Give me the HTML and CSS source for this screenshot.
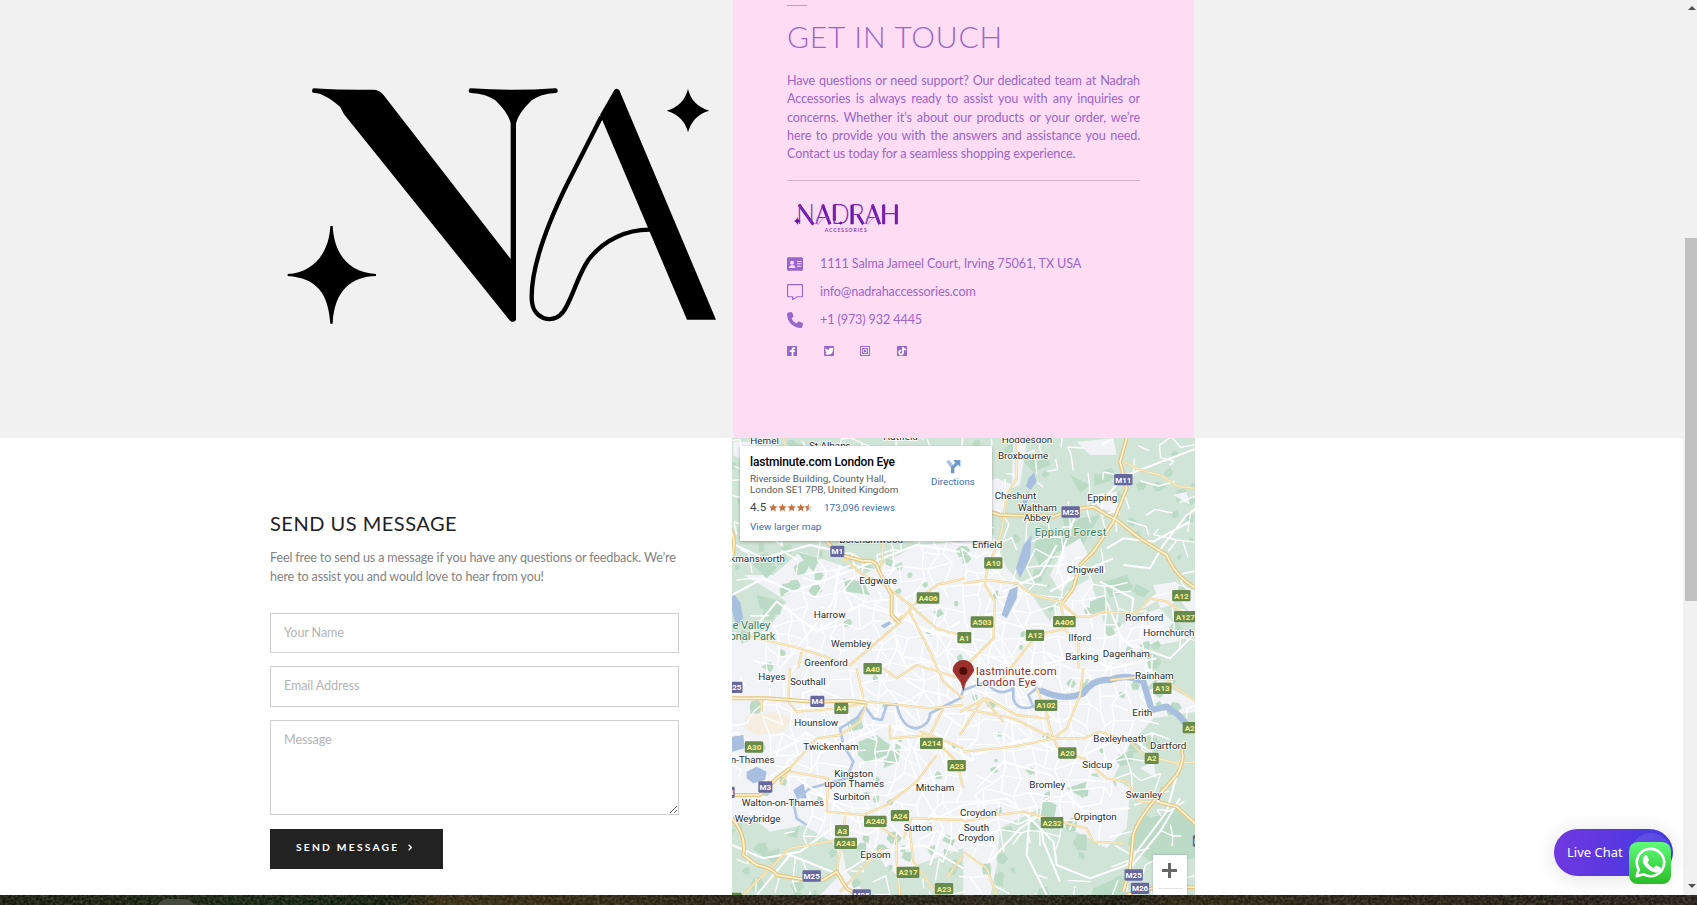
FILE: index.html
```html
<!DOCTYPE html>
<html lang="en">
<head>
<meta charset="utf-8">
<title>Nadrah Accessories – Contact</title>
<link rel="stylesheet" href="styles.css">
</head>
<body>
<main class="page">
  <section class="intro">
    <svg class="monogram" viewBox="0 0 1389 870" aria-label="NA">
      <path d="M133 85Q180 90 309 89Q327 89 340 104L722 597V190Q716 160 676 121Q650 102 603 99A7 7 0 0 1 603 85Q730 94 855 85A7 7 0 0 1 857 99Q810 102 785 121Q745 160 738 190V780Q730 790 720 782L222 163L210 140Q160 98 133 99A7 7 0 0 1 133 85Z"/>
      <path d="M1033 90Q1041 82 1048 91L1338 779H1251L998 183L990 165Z"/>
      <path d="M994 170L890 375Q785 590 785 710C785 750 800 765 820 774C850 784 875 770 890 738C915 690 925 645 955 600C1000 540 1070 508 1142 509" fill="none" stroke="#000" stroke-width="13"/>
      <path d="M181 498H188C192 575 230 637 318 642V648C245 650 193 690 188 791H181C175 700 140 654 53 648V642C130 638 177 580 181 498Z"/>
      <path d="M1254 87Q1266 137 1318 152Q1268 166 1254 217Q1242 168 1190 152Q1241 138 1254 87Z"/>
    </svg>
    <div class="touch">
      <span class="rule"></span>
      <h1>GET IN TOUCH</h1>
      <p class="lead">Have questions or need support? Our dedicated team at Nadrah Accessories is always ready to assist you with any inquiries or concerns. Whether it’s about our products or your order, we’re here to provide you with the answers and assistance you need. Contact us today for a seamless shopping experience.</p>
      <svg class="wordmark" viewBox="0 0 330 99">
        <path class="wm-heavy" d="M36 2L79 62M107 3L129 61M142 2V50M195 2V61M213 34L229 61M256 3L278 61M290 2V61M328 2V61"/>
        <text class="wm-name" x="28" y="61" textLength="309" lengthAdjust="spacingAndGlyphs">NADRAH</text>
        <path class="wm-hair" d="M99 28Q84 52 90 60Q96 64 101 50Q108 39 121 39M248 28Q233 52 239 60Q245 64 250 50Q257 39 270 39"/>
        <path fill="#6a0dad" d="M31 39Q33 49 42 51Q33 53 31 63Q29 53 20 51Q29 49 31 39ZM161 52l5 5-5 5-5-5Z"/>
        <text class="wm-sub" x="113" y="84" textLength="126">ACCESSORIES</text>
      </svg>
      <ul class="contacts">
        <li><svg viewBox="0 0 48 48"><path fill-rule="evenodd" d="M4 4H44Q48 4 48 8V40Q48 44 44 44H4Q0 44 0 40V8Q0 4 4 4ZM15 14A6 6 0 1 0 15 26A6 6 0 1 0 15 14ZM6 36H25Q25 28 19 28H12Q6 28 6 36ZM30 15V18H43V15ZM30 22V25H43V22ZM30 29V32H43V29Z"/></svg><span>1111 Salma Jameel Court, Irving 75061, TX USA</span></li>
        <li><svg viewBox="0 0 48 48"><path fill="none" stroke="#9966cc" stroke-width="3.4" d="M4 1.7H44Q46.3 1.7 46.3 4V36Q46.3 38.3 44 38.3H30L17 47V38.3H4Q1.7 38.3 1.7 36V4Q1.7 1.7 4 1.7Z"/></svg><span>info@nadrahaccessories.com</span></li>
        <li><svg viewBox="0 0 512 512"><path d="M164.900 24.600c-7.700-18.600-28-28.500-47.400-23.200l-88 24C12.100 30.200 0 46 0 64C0 311.400 200.600 512 448 512c18 0 33.800-12.100 38.600-29.500l24-88c5.300-19.400-4.600-39.700-23.200-47.400l-96-40c-16.300-6.800-35.200-2.100-46.300 11.600L304.700 368C234.300 334.700 177.300 277.700 144 207.300L193.300 167c13.700-11.200 18.400-30 11.600-46.300l-40-96z"/></svg><span>+1 (973) 932 4445</span></li>
      </ul>
      <div class="social">
        <svg viewBox="0 0 30 30"><rect width="30" height="30" rx="2"/><path fill="#fff" d="M14 30V18H8V13H14V9Q14 4 20 4H24V9H21Q19 9 19 11V13H24L23 18H19V30Z"/></svg>
        <svg viewBox="0 0 30 30"><rect width="30" height="30" rx="2"/><path fill="#fff" d="M2 6Q9 12 15 12Q14 5 20 5Q23 5 25 7L29 5L27 10Q27 26 12 26Q6 26 2 23Q6 23 9 21Q5 20 4 16H7Q2 13 3 10L5 11Q1 8 2 6Z"/></svg>
        <svg viewBox="0 0 30 30"><rect width="30" height="30" rx="2"/><g fill="none" stroke="#fff" stroke-width="2.5"><rect x="4.500" y="4.500" width="21" height="21"/><rect x="10" y="10" width="10" height="10" rx="2"/></g></svg>
        <svg viewBox="0 0 30 30"><rect width="30" height="30" rx="2"/><path fill="none" stroke="#fff" stroke-width="5" d="M13 14Q6 13 6 20Q7 26 12 26Q18 25 18 19V3Q19 10 27 11"/></svg>
      </div>
    </div>
  </section>

  <section class="reach">
    <form class="message">
      <h2>SEND US MESSAGE</h2>
      <p>Feel free to send us a message if you have any questions or feedback. We’re here to assist you and would love to hear from you!</p>
      <input type="text" placeholder="Your Name">
      <input type="text" placeholder="Email Address">
      <textarea placeholder="Message"></textarea>
      <button type="button">SEND MESSAGE<svg viewBox="0 0 12 20"><path d="M2 2L10 10L2 18" fill="none" stroke="#fff" stroke-width="4"/></svg></button>
    </form>

    <div class="map">
      <svg class="map-art" viewBox="6 9 1389 1371">
        <rect x="0" y="0" width="1400" height="1390" fill="#f1f3f6"/>
        <g class="park">
          <path d="M0 0H1400V470L1330 440L1260 490L1190 560L1130 590L1080 430L1010 470L960 560L900 470L830 400L790 300L700 320L560 330L470 380L400 420L330 390L210 350L130 420L0 420Z"/>
          <path d="M6 400L110 460L170 500L130 560L80 600L6 590Z"/>
          <path d="M0 1150L60 1140L120 1190L220 1170L270 1200L320 1230L330 1320L260 1390H0Z"/>
          <path d="M330 1210L440 1260L500 1320L560 1290L700 1240V1390H420L350 1310Z"/>
          <path d="M810 1180L930 1120L990 1170L1060 1200L1130 1240L1190 1180L1200 1060L1150 1030L1200 930L1270 850L1400 830V1390H780L800 1290Z"/>
          <path d="M1230 640L1340 620L1400 590V800L1320 760L1270 720Z"/>
          <path d="M1170 560L1290 520L1400 640V560L1330 470Z"/>
        </g>
        <g class="wood" id="woods">
          <path d="M386 920L440 900L480 930L470 960L410 985L384 960Z"/><path d="M480 945L512 930L505 980L460 1000Z"/>
          <path d="M60 380L110 350L140 400L110 430ZM80 480L160 500L150 540L90 520ZM200 350L270 370L250 410ZM340 430L400 440L420 480L350 470Z"/>
          <path d="M930 270L1000 290L1050 250L1110 240L1060 330L980 350L940 420L910 350Z"/>
          <path d="M1120 440L1190 420L1210 460L1140 490ZM1080 500L1130 480L1140 520L1080 540ZM880 80L950 50L960 90L910 110ZM1020 120L1080 150L1050 175Z"/>
          <path d="M1230 1160L1340 1120L1400 1160V1270L1260 1280L1200 1230ZM1090 1360L1180 1320L1200 1390H1080Z"/>
          <path d="M940 1090L980 1110L970 1160L930 1140ZM1010 1060L1070 1040L1060 1090ZM350 860L390 840L400 880L360 890ZM900 1010L910 1000L914 1020ZM1250 760L1300 710L1340 740L1290 790ZM170 1200L210 1170L200 1210ZM90 1260L150 1240L140 1290Z"/>
          <path d="M885 1005l20-8 12 12-15 12zM780 1000l18-6 8 16-20 6zM805 890l12 4-4 12-10-3zM590 1240l24-10 4 20-14 12zM610 530l22-8 10 15-20 10zM470 370l20 6-6 20-18-8z"/>
        </g>
        <path fill="#f6eee0" d="M45 840L140 830L185 850L160 890L80 900L45 880Z"/>
        <g class="built">
          <path d="M720 160L800 130L850 150L820 230L700 220ZM850 20L890 20L870 150L845 160ZM1040 20L1150 10L1160 60L1080 60ZM1080 180L1160 170L1170 240L1110 220ZM1000 340L1050 310L1080 370L990 470L960 420ZM1270 450L1340 440L1330 510L1290 520ZM1330 180L1370 170L1380 210Z"/>
          <path d="M10 20L80 20L60 90L10 60ZM1080 1020L1150 1040L1180 1120L1110 1170L1070 1120ZM1230 1000L1270 980L1280 1030Z"/>
        </g>
        <g id="streets" class="street"></g>
        <g class="water">
          <path d="M6 470L30 500L40 550L20 575L6 530ZM880 330L905 300L900 370L870 430L858 400ZM840 460L865 440L860 490L830 550L815 540ZM50 1010L80 995L110 1010L105 1035L70 1045L50 1030ZM6 905L40 900L44 940L6 950ZM190 1065L220 1045L230 1090L200 1090Z"/>
          <path d="M895 130L912 112L920 140L902 165L888 155ZM880 180L895 170L890 230L878 215ZM452 572L478 558L484 566L462 580Z"/>
          <path class="river" d="M230 1170L200 1150L190 1100L240 1060L350 1030L370 980L340 930L330 880L380 850L405 815L430 850L455 855L470 810L500 808Q515 880 560 880Q600 870 600 835L650 810L690 790L700 765L770 740Q800 790 850 760V790Q860 830 910 815L895 780L920 760Q1000 800 1060 775Q1090 730 1140 735"/>
          <path class="estuary" d="M930 765Q1000 800 1060 775Q1090 730 1140 735Q1190 715 1240 740L1265 825L1310 815L1345 840L1376 875"/>
        </g>
        <g class="local">
          <path d="M6 325L100 370L240 330L330 350M6 480L100 430L190 470L380 400L560 330L690 350M40 620L140 500L260 590L390 510L500 540L620 600L690 560M150 700L240 590L310 500L330 390"/>
          <path d="M1180 390L1260 400L1300 330L1370 240L1400 220M1110 440L1210 490L1200 570M980 420L1000 340L1040 230L1110 200L1190 120L1400 40M1130 340L1180 310L1270 320L1380 260M960 470L1080 400L1150 370M820 470L930 420L980 330M1130 500L1180 620L1320 670L1400 590"/>
          <path d="M900 700L1050 660L1150 700L1280 670M730 960L900 910L1040 970L1190 900L1260 950M740 1060L820 980L960 1020L1060 1130L1200 1120M700 1110L830 1090L900 1150L970 1220L980 1290L1080 1330L1190 1290L1310 1130L1360 950M780 1280L870 1180L930 1140L940 1220L990 1340M900 1120L890 1260L950 1380M1200 1300L1290 1190L1350 1090"/>
          <path d="M6 1230L100 1270L210 1250L320 1170L410 1200L500 1150L600 1160L700 1110M80 1380L180 1260L330 1320L440 1250L580 1230L700 1300M200 1030L290 1090L380 1160L520 1150M120 960L220 910L330 930L470 870L640 930M600 1290L640 1180L580 1080L540 980"/>
        </g>
        <g class="road">
          <path d="M160 9L170 50L240 250L290 320M460 320L455 390L440 410M340 370L400 420L450 440L540 510L620 580L690 600M705 430L620 450L560 500L500 570L430 630L360 690L210 640L40 600M205 700L215 650M490 560L540 530L600 650L640 740L700 790"/>
          <path d="M6 790H95V830M180 700L175 800L200 830L330 820L420 800L600 820L700 810M380 700L400 790M410 805L390 860L330 900L260 910L180 1000L150 1050M460 700L500 730L560 690L690 730M480 870V910L600 900L570 890M600 900L700 940M620 960L560 1040L470 1110L400 1140L290 1130L295 1030L180 1010"/>
          <path d="M345 1145L340 1200L320 1310M40 1380L180 1240L350 1210M400 1140L500 1210L500 1280L510 1380M455 1240L330 1370M640 820L600 900L680 980L700 1060M520 1210L545 1150L700 1155M540 1190L550 1280L630 1390M700 1260L650 1330"/>
          <path d="M858 9L860 130L830 180L815 290L770 410L765 450L795 500L790 610L700 700M700 445L770 435L860 445L910 480L990 500M990 500L1040 545H1080L1120 530L1220 535L1260 490L1310 500L1400 560M990 500L1010 590L1045 610V700M810 740L920 600L1010 580M690 830L770 790L860 840L950 850M1400 160L1345 155L1290 120L1230 105L1180 80M1140 735L1290 720L1340 760L1400 800"/>
          <path d="M700 820L850 850L970 910H1060L1110 890L1200 920L1240 960L1280 970L1340 985L1400 980M970 910L960 880L950 830L920 760M970 910L1010 880L1050 780L1060 700M970 910L990 950L1060 970L1130 1030L1190 1040L1230 1100L1280 1100M700 950L850 935L970 910M700 1160L800 1140L880 1130L990 1160L1070 1180L1090 1220L1180 1225M700 1250L770 1300L800 1380M690 900L760 790L820 860"/>
        </g>
        <g class="motorway">
          <path d="M6 370Q20 310 0 280M290 320L330 360L400 378Q440 370 448 410L485 480V540L510 565M6 790H110L250 800L360 797L410 803M6 1150Q50 1200 40 1260L80 1290Q130 1300 140 1320L230 1335H280L320 1310L350 1360L390 1385M6 1080H90L140 1030L180 1000"/>
          <path d="M780 230L810 240L970 245L1020 225L1090 215L1130 240L1160 255L1230 310L1310 360Q1340 430 1400 460M1190 9L1170 80L1190 160L1150 260L1090 350L1050 390L1030 460L1000 500M1180 1370L1200 1300L1210 1200Q1220 1160 1270 1100L1340 1020Q1370 970 1350 930M1280 1100L1340 1115L1400 1170M1180 1390Q1220 1350 1400 1357"/>
        </g>
        <g class="place">
          <text x="61" y="27">Hemel</text><text x="237" y="41">St Albans</text><text x="460" y="14">Hatfield</text><text x="328" y="324">Borehamwood</text>
          <text x="-40" y="381">Rickmansworth</text><text x="388" y="447">Edgware</text><text x="251" y="549">Harrow</text><text x="303" y="637">Wembley</text><text x="223" y="692">Greenford</text>
          <text x="815" y="25">Hoddesdon</text><text x="804" y="73">Broxbourne</text><text x="794" y="193">Cheshunt</text><text x="864" y="228">Waltham</text><text x="881" y="258">Abbey</text><text x="1072" y="198">Epping</text><text x="727" y="340">Enfield</text><text x="1010" y="415">Chigwell</text><text x="1186" y="557">Romford</text><text x="1240" y="602">Hornchurch</text><text x="1015" y="619">Ilford</text><text x="1006" y="674">Barking</text><text x="1118" y="667">Dagenham</text>
          <text x="85" y="734">Hayes</text><text x="180" y="751">Southall</text><text x="193" y="872">Hounslow</text><text x="220" y="945">Twickenham</text><text x="-120" y="984">Staines-on-Thames</text><text x="313" y="1026">Kingston</text><text x="283" y="1056">upon Thames</text><text x="310" y="1096">Surbiton</text><text x="35" y="1112">Walton-on-Thames</text><text x="14" y="1160">Weybridge</text><text x="557" y="1068">Mitcham</text><text x="521" y="1189">Sutton</text><text x="391" y="1268">Epsom</text>
          <text x="1215" y="731">Rainham</text><text x="1207" y="842">Erith</text><text x="1090" y="922">Bexleyheath</text><text x="1260" y="942">Dartford</text><text x="1057" y="999">Sidcup</text><text x="898" y="1060">Bromley</text><text x="1187" y="1088">Swanley</text><text x="1031" y="1155">Orpington</text><text x="690" y="1144">Croydon</text><text x="701" y="1187">South</text><text x="684" y="1217">Croydon</text>
        </g>
        <g class="forest"><text x="914" y="304" textLength="215">Epping Forest</text><text x="-59" y="582">Colne Valley</text><text x="-66" y="614">Regional Park</text></g>
        <g id="shields"></g>
        <path fill="#9d2f2c" stroke="#7a1f1c" stroke-width="2" d="M700 766Q697 742 680 724Q669 710 669 706A31 30 0 0 1 731 706Q731 710 720 724Q703 742 700 766Z"/><circle cx="700" cy="708" r="12" fill="#4e0d0b"/>
        <g class="poi"><text x="738" y="720" textLength="242">lastminute.com</text><text x="739" y="754" textLength="180">London Eye</text></g>
      </svg>
      <div class="place-card">
        <div class="place-info">
          <b>lastminute.com London Eye</b>
          <span class="addr">Riverside Building, County Hall,<br>London SE1 7PB, United Kingdom</span>
          <span class="rating"><span class="score">4.5</span><svg viewBox="0 0 134 26"><g fill="#c5703f"><path id="star" d="M13 1L16.500 9.500L26 10L19 16L21 25L13 20L5 25L7 16L0 10L9.500 9.500Z"/><use href="#star" x="28"/><use href="#star" x="56"/><use href="#star" x="84"/></g><use href="#star" x="108" fill="#dcdcdc"/><path fill="#c5703f" d="M121 1V20L113 25L115 16L108 10L117.500 9.500Z"/></svg><a>173,096 reviews</a></span>
          <a class="larger">View larger map</a>
        </div>
        <div class="directions"><svg viewBox="0 0 48 48"><path d="M3 11L12 5L24 20V30L18 30Z" fill="#a9c3e0"/><path fill="#6f9ac9" d="M18 46V27L31 14L25 6H46V27L39 20L28 31V46Z"/></svg><a>Directions</a></div>
      </div>
      <div class="zoom-ctl"><i></i></div>
    </div>
  </section>
  <footer class="scenery"><svg width="100%" height="10"><filter id="grain" x="0" y="0" width="100%" height="100%"><feTurbulence type="fractalNoise" baseFrequency=".35" numOctaves="2" seed="4"/><feColorMatrix values="0 0 0 0 .2  0 0 0 0 .19  0 0 0 0 .12  0 .9 0 0 -.3"/></filter><rect width="100%" height="10" filter="url(#grain)"/></svg><span class="knob"></span></footer>
</main>

<div class="scrollbar"><i class="up"></i><i class="thumb"></i><i class="down"></i></div>
<div class="chat"><span>Live Chat</span><i></i></div>
<svg class="whatsapp" viewBox="0 0 126 126">
  <defs><linearGradient id="wa" x2="0" y2="1"><stop stop-color="#5ffc7b"/><stop offset="1" stop-color="#28bd26"/></linearGradient></defs>
  <rect width="126" height="126" rx="26" fill="url(#wa)"/>
  <path fill="none" stroke="#fff" stroke-width="8" stroke-linejoin="round" d="M23 103L29 82A41 41 0 1 1 44 97Z"/>
  <path fill="#fff" d="M48 40Q52 38 55 42L60 54Q60 57 55 61Q62 74 74 78L80 71Q82 70 84 71L96 77Q98 83 91 89Q84 94 73 90Q52 82 43 64Q38 50 48 40Z"/>
</svg>
<script src="map.js"></script>
</body>
</html>
```

FILE: styles.css
```css
* { box-sizing: border-box; }
body { margin: 0; width: 1697px; height: 905px; overflow: hidden; background: #fff; font-family: Lato, sans-serif; font-variant-ligatures: none; }
.page { height: 905px; display: flex; flex-direction: column; }

.intro { height: 438px; background: #f1f1f1; display: flex; padding: 0 0 0 270px; }
.monogram { width: 463px; height: 290px; margin-top: 60px; }
.touch { width: 461px; background: #feddf4; padding: 5px 54px 0; display: flex; flex-direction: column; color: #9966cc; }
.rule { width: 20px; height: 1px; background: #d7a06f; }
h1 { margin: 11px 0 0; font-size: 30px; font-weight: 300; line-height: 38px; letter-spacing: .8px; }
.lead { margin: 17px 0 0; height: 109px; width: 353px; font-size: 12.6px; letter-spacing: -.12px; line-height: 18.25px; text-align: justify; border-bottom: 1px solid #cfb0c8; }
.wordmark { width: 110px; height: 33px; margin-top: 23px; overflow: visible; }
.wm-name { font: 300 84px Lato, sans-serif; fill: #7a2bb5; }
.wm-sub { font: 700 15px Lato, sans-serif; fill: #8a3fc0; }
.wm-heavy { fill: none; stroke: #6a0dad; stroke-width: 9; }
.wm-hair { fill: none; stroke: #9a58c8; stroke-width: 2; }
.contacts { list-style: none; margin: 13px 0 0; padding: 0; }
.contacts li { display: flex; align-items: center; height: 28px; gap: 17px; font-size: 12.6px; letter-spacing: -.12px; }
.contacts svg { width: 16px; height: 16px; fill: #9966cc; }
.contacts span { padding-bottom: 2px; }
.social { display: flex; gap: 26.7px; margin-top: 12px; }
.social svg { width: 10px; height: 10px; fill: #9966cc; }

.reach { height: 457px; display: flex; padding-left: 270px; }
.message { width: 409px; margin-right: 53px; padding-top: 73px; display: flex; flex-direction: column; align-items: flex-start; }
h2 { margin: 0; font-size: 20px; font-weight: 400; line-height: 24px; letter-spacing: .5px; color: #222; }
.message p { margin: 13px 0 0; height: 56px; font-size: 12.6px; letter-spacing: -.15px; line-height: 19px; color: #828282; }
.message input, .message textarea { display: block; width: 409px; border: 1px solid #cfcfcf; padding: 0 13px 1px; font: 12.6px Lato, sans-serif; letter-spacing: -.12px; background: #fff; margin: 9px 0 0; border-radius: 0; outline: 0; }
.message input { height: 40px; }
.message input + input { margin-top: 13px; height: 41px; padding-bottom: 3px; }
.message textarea { height: 95px; margin-top: 13px; padding-top: 11px; }
::placeholder { color: #b4b4b4; opacity: 1; }
button { margin-top: 14px; width: 173px; height: 40px; border: 0; background: #222; color: #fff; font: 700 10.3px Lato, sans-serif; letter-spacing: 2.2px; display: flex; align-items: center; padding: 0 0 4px 26px; }
button svg { width: 4px; height: 7px; margin-left: 9px; }

.map { position: relative; width: 463px; height: 457px; overflow: hidden; margin-left: -1px; }
.map-art { display: block; width: 463px; height: 457px; font-family: Roboto, sans-serif; }
.map { margin-left: 0; }
.park path { fill: #d0e5d7; }
.wood path { fill: #bcdbc7; }
.built path { fill: #f1f3f6; }
.water path { fill: #a9bfe0; }
.water .river { fill: none; stroke: #b1c5e6; stroke-width: 8; stroke-linejoin: round; }
.water .estuary { fill: none; stroke: #a9bfe0; stroke-width: 19; stroke-linejoin: round; }
.street path { fill: none; stroke: #fff; stroke-width: 4; }
.local path { fill: none; stroke: #fff; stroke-width: 6; stroke-linejoin: round; }
.road path { fill: none; stroke: #f0d69b; stroke-width: 7; stroke-linejoin: round; }
.road .core { stroke: #fbeecb; stroke-width: 3; }
.motorway path { fill: none; stroke: #e6c581; stroke-width: 12; stroke-linejoin: round; }
.motorway .core { stroke: #fdf3d4; stroke-width: 5; }
.place text { font-size: 29.5px; fill: #262a2e; stroke: #fff; stroke-width: 5; paint-order: stroke; }
.forest text { font-size: 33px; fill: #3d8060; stroke: #eef6f1; stroke-width: 4; paint-order: stroke; }
.poi text { font-size: 34px; fill: #912a29; stroke: #fff; stroke-width: 6; paint-order: stroke; }
.shield { font-size: 24px; font-weight: 700; text-anchor: middle; }
.place-card { position: absolute; left: 8px; top: 8px; width: 252px; height: 95px; background: #fff; box-shadow: 0 1px 3px rgba(0,0,0,.3); font-family: Roboto, sans-serif; display: flex; padding: 8px 0 0 10px; }
.place-info { width: 181px; display: flex; flex-direction: column; white-space: nowrap; }
.place-info b { font-size: 12px; letter-spacing: -.16px; line-height: 16px; font-weight: 500; color: #000; }
.addr { font-size: 9.95px; line-height: 11px; color: #5b5b5b; margin-top: 3px; }
.rating { display: flex; align-items: center; height: 14px; margin-top: 5px; font-size: 9.9px; }
.score { font-size: 11.7px; color: #444; width: 19px; }
.rating svg { width: 44px; height: 9px; margin-right: 11px; }
.place-card a { color: #3a6fb5; }
.larger { font-size: 9.95px; margin-top: 7px; }
.directions { width: 44px; display: flex; flex-direction: column; align-items: center; font-size: 9.75px; padding-top: 4px; gap: 2px; }
.directions svg { width: 16px; height: 16px; }
.zoom-ctl { position: absolute; right: 8px; bottom: 0; width: 34px; height: 40px; background: #fff; box-shadow: 0 0 3px rgba(0,0,0,.2); padding: 8px 9px; }
.zoom-ctl::after { content: ""; display: block; width: 25px; height: 1px; margin: 10px 0 0 -4px; background: #e3e3e3; }
.zoom-ctl i { display: block; width: 15px; height: 15px; background: linear-gradient(#666, #666) 50% 50% / 15px 3px no-repeat, linear-gradient(#666, #666) 50% 50% / 3px 15px no-repeat; }

.scenery { position: relative; height: 10px; overflow: hidden; background: linear-gradient(90deg, #14180c 0, #131d0d 120px, #11200f 280px, #0e1a0c 390px, #33280f 440px, #2f2410 600px, #231d10 720px, #241f15 1000px, #17150c 1120px, #2a2110 1180px, #211b14 1500px, #231b17 1697px); }
.scenery svg { display: block; }
.knob { position: absolute; left: 156px; top: 4px; width: 40px; height: 40px; border-radius: 12px; background: #464b40; }

.scrollbar { position: absolute; left: 1683px; top: 0; width: 14px; height: 895px; background: #f1f1f1; }
.scrollbar i { position: absolute; left: 5px; border: 4px solid transparent; }
.scrollbar .up { top: 2px; border-bottom: 4px solid #505050; border-top-width: 4px; }
.scrollbar .down { top: 884px; border-top-color: #505050; }
.scrollbar .thumb { left: 2px; top: 238px; width: 12px; height: 363px; border: 0; background: #c1c1c1; }
.chat { position: absolute; left: 1554px; top: 829px; width: 119px; height: 47px; border-radius: 24px; overflow: hidden; background: linear-gradient(100deg, #7338e0, #4038e0); color: #fff; font: 13px "Noto Sans", sans-serif; display: flex; align-items: center; padding: 0 0 2px 13px; box-shadow: 0 2px 20px rgba(0,0,0,.12); }
.chat i { position: absolute; left: 77px; top: 4px; width: 40px; height: 40px; border-radius: 50%; background: rgba(255,255,255,.1); }
.whatsapp { position: absolute; left: 1629px; top: 842px; width: 42px; height: 42px; }
```

FILE: map.js
```js
const NS = "http://www.w3.org/2000/svg";
function add(parent, tag, attrs, text) {
  const el = document.createElementNS(NS, tag);
  for (const k in attrs) el.setAttribute(k, attrs[k]);
  if (text) el.textContent = text;
  parent.appendChild(el);
  return el;
}

// Residential street network: a seeded, jittered lattice over the built-up area.
let seed = 7;
const rnd = () => (seed = (seed * 16807) % 2147483647) / 2147483647;
const step = 42, nodes = [];
for (let r = 0; r < 36; r++) {
  nodes.push([]);
  for (let c = 0; c < 36; c++) {
    nodes[r].push([c * step + (rnd() - .5) * 36 - 20, r * step + (rnd() - .5) * 36 - 20]);
  }
}
let d = "";
for (let r = 0; r < 35; r++) {
  for (let c = 0; c < 35; c++) {
    const [x, y] = nodes[r][c];
    const dist = Math.hypot((x - 680) / 620, (y - 760) / 480);
    const p = dist < 1 ? .8 : .22;
    for (const [nx, ny] of [nodes[r][c + 1], nodes[r + 1][c]]) {
      if (rnd() < p) d += `M${x.toFixed(0)} ${y.toFixed(0)}L${nx.toFixed(0)} ${ny.toFixed(0)}`;
    }
    if (dist < .5 && rnd() < .5) {
      const [nx, ny] = nodes[r + 1][c + 1];
      d += `M${x.toFixed(0)} ${y.toFixed(0)}L${nx.toFixed(0)} ${ny.toFixed(0)}`;
    }
  }
}
add(document.getElementById("streets"), "path", { d });

// Small parks and copses, sparse in the centre and denser toward the edges.
let patches = "";
for (let i = 0; i < 230; i++) {
  const cx = rnd() * 1400, cy = rnd() * 1390;
  const dist = Math.hypot((cx - 680) / 620, (cy - 760) / 480);
  if (dist < .8 && rnd() < .55) continue;
  const size = dist < .8 ? 6 + rnd() * 9 : 8 + rnd() * 18;
  for (let k = 0; k < 6; k++) {
    const a = k * Math.PI / 3, rad = size * (.55 + rnd() * .7);
    patches += `${k ? "L" : "M"}${(cx + rad * Math.cos(a)).toFixed(0)} ${(cy + rad * Math.sin(a)).toFixed(0)}`;
  }
  patches += "Z";
}
add(document.getElementById("woods"), "path", { d: patches });

document.querySelectorAll(".motorway path, .road path").forEach(p => {
  const core = p.cloneNode();
  core.setAttribute("class", "core");
  p.parentNode.appendChild(core);
});

// Road number shields: label and centre point.
const shields = [
  ["M1", 322, 349], ["A406", 594, 489], ["A40", 428, 701], ["M11", 1180, 134], ["M25", 1022, 231],
  ["A10", 790, 384], ["A503", 756, 561], ["A1", 703, 608], ["A12", 915, 601], ["A406", 1003, 560],
  ["A12", 1354, 482], ["A127", 1366, 545], ["M25", 10, 757], ["M4", 262, 799], ["A4", 334, 820],
  ["A30", 72, 936], ["A214", 604, 925], ["A23", 680, 992], ["M3", 106, 1056], ["M3", -7, 1072],
  ["A3", 336, 1187], ["A240", 436, 1159], ["A24", 510, 1142], ["A243", 347, 1225], ["M25", 245, 1323],
  ["M25", 395, 1380], ["A217", 534, 1312], ["A23", 642, 1361], ["A102", 948, 811], ["A13", 1297, 760],
  ["A2", 1379, 878], ["A20", 1012, 954], ["A2", 1265, 970], ["A232", 966, 1163], ["M25", 1211, 1320],
  ["M26", 1230, 1360], ["A3", 14, 1390], ["M20", 1416, 1218]
];
const layer = document.getElementById("shields");
for (const [label, x, y] of shields) {
  const w = 16 + label.length * 13;
  add(layer, "rect", { x: x - w / 2, y: y - 17, width: w, height: 34, rx: 4, fill: label[0] === "M" ? "#67689f" : "#688b4d" });
  add(layer, "text", { x, y: y + 9, class: "shield", fill: label[0] === "M" ? "#fff" : "#f5ec8f" }, label);
}
```
